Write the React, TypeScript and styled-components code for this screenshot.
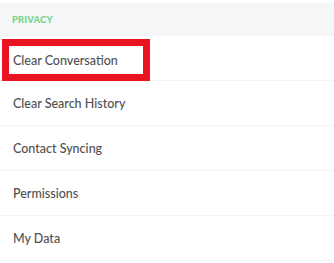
import React from 'react'
import styled, { createGlobalStyle } from 'styled-components'

const GlobalStyle = createGlobalStyle`
  body {
    margin: 0;
    background: #ffffff;
    font-family: 'Lato', 'Noto Sans', sans-serif;
  }
`

const Page = styled.div`
  width: 334px;
  padding-top: 3px;
  display: flex;
  flex-direction: column;
`

const SectionHeader = styled.div`
  height: 33px;
  display: flex;
  align-items: center;
  padding-left: 12px;
  background: #f5f6f8;
  color: #74d48c;
  font-size: 9.5px;
  font-weight: 900;
  letter-spacing: 0.1px;
`

const Row = styled.div<{ highlighted?: boolean }>`
  box-sizing: border-box;
  height: 45px;
  display: flex;
  align-items: ${({ highlighted }) => (highlighted ? 'flex-end' : 'center')};
  padding-left: ${({ highlighted }) => (highlighted ? '2px' : '13px')};
  border-bottom: 1px solid #f3f4f6;
`

const Label = styled.span<{ highlighted?: boolean }>`
  color: #505050;
  font-size: 12.5px;
  font-weight: 500;
  ${({ highlighted }) =>
    highlighted &&
    `
    box-sizing: border-box;
    width: 148px;
    height: 42px;
    margin-bottom: -1px;
    padding-left: 4px;
    display: flex;
    align-items: center;
    border: 7px solid #e8141f;
  `}
`

const items = [
  { label: 'Clear Conversation', highlighted: true },
  { label: 'Clear Search History' },
  { label: 'Contact Syncing' },
  { label: 'Permissions' },
  { label: 'My Data' },
]

export default function App() {
  return (
    <>
      <GlobalStyle />
      <Page>
        <SectionHeader>PRIVACY</SectionHeader>
        {items.map(item => (
          <Row key={item.label} highlighted={item.highlighted}>
            <Label highlighted={item.highlighted}>{item.label}</Label>
          </Row>
        ))}
      </Page>
    </>
  )
}
